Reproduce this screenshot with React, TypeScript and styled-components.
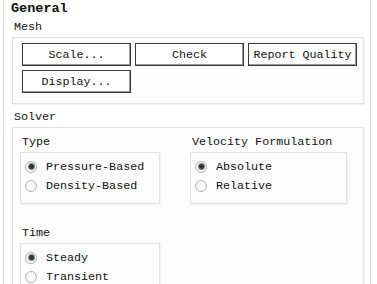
import React from "react";
import styled, { createGlobalStyle } from "styled-components";

const Global = createGlobalStyle`
  html, body { margin: 0; padding: 0; background: #ffffff; }
  body { font-family: "Liberation Mono", "DejaVu Sans Mono", monospace; color: #111111; }
`;

const Page = styled.div`
  width: 377px;
  height: 284px;
  overflow: hidden;
  background: #ffffff;
  display: flex;
`;

const Panel = styled.div`
  margin-left: 3px;
  width: 368px;
  height: 284px;
  border-left: 1px solid #d6d6d6;
  border-right: 1px solid #d0d0d0;
  padding: 0 6px 0 8px;
  box-sizing: border-box;
`;

const Heading = styled.div`
  font-size: 13.5px;
  font-weight: bold;
  line-height: 16px;
  padding: 1px 0 0 0;
  margin-left: -1px;
  height: 20px;
  box-sizing: border-box;
`;

const Label = styled.div<{ $indent?: number }>`
  font-size: 11.7px;
  line-height: 14px;
  padding-left: ${(p) => p.$indent ?? 2}px;
  height: 17px;
`;

const Box = styled.div<{ $w?: number }>`
  border: 1px solid #e2e2e2;
  box-shadow: 1px 1px 0 #f3f3f3, inset 1px 1px 0 #fbfbfb;
  background: #fdfdfd;
  box-sizing: border-box;
  ${(p) => (p.$w ? `width: ${p.$w}px;` : "")}
`;

const MeshBox = styled(Box)`
  padding: 5px 0 10px 9px;
  display: flex;
  flex-direction: column;
  gap: 4px;
`;

const ButtonRow = styled.div`
  display: flex;
  gap: 4px;
`;

const Button = styled.button`
  width: 109px;
  height: 23px;
  padding: 0;
  margin: 0;
  background: #ffffff;
  border: 1px solid #3a3a3a;
  box-shadow: inset -1px -1px 0 #9a9a9a;
  font-family: "Liberation Mono", "DejaVu Sans Mono", monospace;
  font-size: 11.7px;
  color: #111111;
  text-align: center;
  line-height: 20px;
`;

const Gap = styled.div<{ $h: number }>`
  height: ${(p) => p.$h}px;
`;

const SolverBox = styled(Box)`
  padding: 7px 0 0 7px;
  height: 200px;
`;

const Columns = styled.div`
  display: flex;
  gap: 30px;
`;

const Column = styled.div`
  display: flex;
  flex-direction: column;
`;

const RadioBox = styled(Box)`
  padding: 4px 0 8px 4px;
  display: flex;
  flex-direction: column;
`;

const RadioRow = styled.div`
  display: flex;
  align-items: center;
  height: 19px;
  gap: 9px;
  font-size: 11.7px;
`;

const Circle = styled.span<{ $on?: boolean }>`
  width: 12px;
  height: 12px;
  border-radius: 50%;
  border: 1px solid #b4b4b4;
  background: radial-gradient(circle at 50% 50%, #ffffff 0%, #f2f2f2 100%);
  box-sizing: border-box;
  display: flex;
  align-items: center;
  justify-content: center;
  flex: none;
  &::after {
    content: "";
    display: ${(p) => (p.$on ? "block" : "none")};
    width: 5px;
    height: 5px;
    border-radius: 50%;
    background: #333333;
    box-shadow: 0 0 0 1px #8a8a8a;
  }
`;

const Radio = ({ label, on }: { label: string; on?: boolean }) => (
  <RadioRow>
    <Circle $on={on} />
    <span>{label}</span>
  </RadioRow>
);

export default function App() {
  return (
    <Page>
      <Global />
      <Panel>
        <Heading>General</Heading>
        <Label>Mesh</Label>
        <MeshBox>
          <ButtonRow>
            <Button>Scale...</Button>
            <Button>Check</Button>
            <Button>Report Quality</Button>
          </ButtonRow>
          <ButtonRow>
            <Button>Display...</Button>
          </ButtonRow>
        </MeshBox>
        <Gap $h={6} />
        <Label>Solver</Label>
        <SolverBox>
          <Columns>
            <Column>
              <Label>Type</Label>
              <RadioBox $w={140}>
                <Radio label="Pressure-Based" on />
                <Radio label="Density-Based" />
              </RadioBox>
            </Column>
            <Column>
              <Label>Velocity Formulation</Label>
              <RadioBox $w={157}>
                <Radio label="Absolute" on />
                <Radio label="Relative" />
              </RadioBox>
            </Column>
          </Columns>
          <Gap $h={22} />
          <Label>Time</Label>
          <RadioBox $w={140}>
            <Radio label="Steady" on />
            <Radio label="Transient" />
          </RadioBox>
        </SolverBox>
      </Panel>
    </Page>
  );
}
